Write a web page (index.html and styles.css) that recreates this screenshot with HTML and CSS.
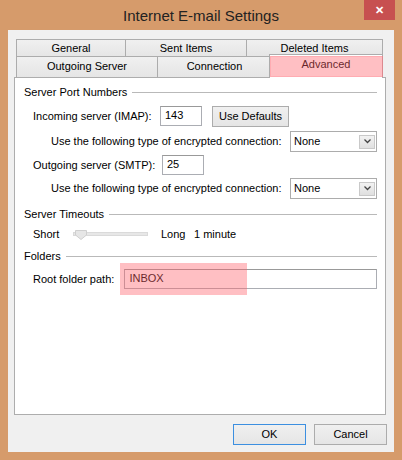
FILE: index.html
```html
<!DOCTYPE html>
<html lang="en">
<head>
    <meta charset="UTF-8">
    <title>Internet E-mail Settings</title>
    <link rel="stylesheet" href="styles.css">
</head>
<body>
    <div class="window">
        <!-- title bar -->
        <div class="titlebar">
            <span></span>
            <span class="title">Internet E-mail Settings</span>
            <span class="close">&#x2715;</span>
        </div>

        <div class="client">
            <div class="tabs">
                <div class="tab-row">
                    <div class="tab" style="width: 110px">General</div>
                    <div class="tab" style="width: 122px">Sent Items</div>
                    <div class="tab" style="width: 137px">Deleted Items</div>
                </div>
                <div class="tab-row">
                    <div class="tab tall" style="width: 142px">Outgoing Server</div>
                    <div class="tab tall" style="width: 115px">Connection</div>
                    <div class="tab tall selected" style="width: 114px">Advanced</div>
                </div>
            </div>

            <div class="panel">
                <div class="group-title"><span>Server Port Numbers</span></div>

                <div class="row r-imap">
                    <span class="label w-imap">Incoming server (IMAP):</span>
                    <span class="textbox port">143</span>
                    <span class="button defaults">Use Defaults</span>
                </div>
                <div class="row r-enc1">
                    <span class="label sub">Use the following type of encrypted connection:</span>
                    <span class="select">None<span class="arrow"><svg width="7" height="5" viewBox="0 0 7 5"><path d="M0.5 0.5 L3.5 3.5 L6.5 0.5" fill="none" stroke="#444" stroke-width="1.3"/></svg></span></span>
                </div>
                <div class="row r-smtp">
                    <span class="label w-smtp">Outgoing server (SMTP):</span>
                    <span class="textbox port">25</span>
                </div>
                <div class="row r-enc2">
                    <span class="label sub">Use the following type of encrypted connection:</span>
                    <span class="select">None<span class="arrow"><svg width="7" height="5" viewBox="0 0 7 5"><path d="M0.5 0.5 L3.5 3.5 L6.5 0.5" fill="none" stroke="#444" stroke-width="1.3"/></svg></span></span>
                </div>

                <div class="group-title g-timeout"><span>Server Timeouts</span></div>
                <div class="row r-slider">
                    <span class="label w-short">Short</span>
                    <span class="slider">
                        <svg class="thumb" width="12" height="10" viewBox="0 0 12 10"><path d="M0.5 0.5 H11.5 V5 L6 9.5 L0.5 5 Z" fill="#e6e6e6" stroke="#cfcfcf"/></svg>
                    </span>
                    <span class="label w-long">Long</span>
                    <span class="label">1 minute</span>
                </div>

                <div class="group-title g-folders"><span>Folders</span></div>
                <div class="row r-root">
                    <span class="label w-root">Root folder path:</span>
                    <span class="textbox root">INBOX</span>
                    <span class="mark"></span>
                </div>
            </div>

            <div class="footer">
                <span class="button ok">OK</span>
                <span class="button">Cancel</span>
            </div>
        </div>
    </div>
</body>
</html>
```

FILE: styles.css
```css
body {
    margin: 0;
    background-color: #d69b6b;
    font-family: "Liberation Sans", Arial, sans-serif;
    font-size: 11px;
    color: #000;
}
.window {
    width: 402px;
    height: 460px;
}
/* title bar */
.titlebar {
    height: 30px;
    display: grid;
    grid-template-columns: 1fr auto 1fr;
}
.title {
    font-size: 15px;
    color: #222;
    line-height: 30px;
    padding-top: 1px;
}
.close {
    justify-self: end;
    width: 31px;
    height: 20px;
    margin-right: 7px;
    background-color: #c75050;
    color: #fff;
    font-size: 11px;
    font-weight: bold;
    text-align: center;
    line-height: 20px;
}
.client {
    margin: 0 8px;
    height: 422px;
    box-sizing: border-box;
    padding: 9px 8px 0 6px;
    background-color: #f0f0f0;
}
/* tabs */
.tabs {
    margin: 0 2px;
}
.tab-row {
    display: flex;
}
.tab {
    box-sizing: border-box;
    height: 18px;
    border: 1px solid #acacac;
    border-bottom: none;
    margin-right: -1px;
    background: linear-gradient(#f0f0f0, #e5e5e5);
    text-align: center;
    line-height: 16px;
}
.tab.tall {
    height: 21px;
    line-height: 19px;
}
.tab-row + .tab-row {
    margin-top: -1px;
}
.tab.selected {
    position: relative;
    height: 24px;
    margin: -2px 0 -1px -2px;
    background: #fff;
    z-index: 1;
    line-height: 18px;
}
.tab.selected::after {
    content: "";
    position: absolute;
    left: 0;
    top: 1px;
    right: -1px;
    bottom: 1px;
    background-color: rgba(255, 95, 105, 0.4);
    border: 1px solid rgba(255, 130, 140, 0.3);
}
/* panel */
.panel {
    position: relative;
    box-sizing: border-box;
    width: 372px;
    height: 338px;
    padding: 6px 8px 0 9px;
    background-color: #fff;
    border: 1px solid #adadad;
}
.group-title {
    display: flex;
    align-items: center;
    height: 16px;
    line-height: 16px;
}
.group-title::after {
    content: "";
    flex: 1;
    height: 1px;
    margin-left: 5px;
    background-color: #b9b9b9;
}
.g-timeout {
    margin-top: 8px;
}
.g-folders {
    margin-top: 6px;
}
.row {
    display: flex;
    align-items: center;
    height: 20px;
    padding-left: 9px;
}
.r-imap { margin-top: 6px; }
.r-enc1 { margin-top: 5px; }
.r-smtp { margin-top: 4px; }
.r-enc2 { margin-top: 3px; }
.r-slider { margin-top: 4px; height: 16px; }
.r-root { margin-top: 5px; position: relative; }
.label {
    white-space: nowrap;
}
.w-imap { width: 127px; }
.w-smtp { width: 129px; }
.w-short { width: 40px; }
.w-long { width: 33px; }
.w-root { width: 92px; }
.label.sub {
    margin-left: 18px;
}
.textbox {
    box-sizing: border-box;
    height: 20px;
    border: 1px solid #abadb3;
    border-top-color: #999;
    padding-left: 4px;
    line-height: 17px;
    background: #fff;
}
.port {
    width: 42px;
}
.root {
    width: 254px;
}
.button {
    box-sizing: border-box;
    display: inline-block;
    width: 73px;
    height: 21px;
    border: 1px solid #acacac;
    background: linear-gradient(#f0f0f0, #e5e5e5);
    text-align: center;
    line-height: 19px;
}
.defaults {
    width: 77px;
    margin-left: 10px;
}
.select {
    position: relative;
    box-sizing: border-box;
    width: 87px;
    height: 21px;
    margin-left: auto;
    border: 1px solid #acacac;
    padding-left: 3px;
    line-height: 18px;
    background: #fff;
}
.arrow {
    position: absolute;
    right: 1px;
    top: 3px;
    width: 16px;
    height: 14px;
    box-sizing: border-box;
    border: 1px solid #c9c9c9;
    background: linear-gradient(#f2f2f2, #e0e0e0);
    display: flex;
    align-items: center;
    justify-content: center;
}
.slider {
    position: relative;
    width: 75px;
    height: 4px;
    margin-right: 13px;
    background-color: #e7e7e7;
    border: 1px solid #dadada;
    box-sizing: border-box;
}
.thumb {
    position: absolute;
    left: 1px;
    top: -3px;
}
.mark {
    position: absolute;
    left: 96px;
    top: -6px;
    width: 127px;
    height: 32px;
    background-color: rgba(255, 95, 105, 0.4);
}
/* buttons at the bottom */
.footer {
    display: flex;
    justify-content: flex-end;
    gap: 8px;
    margin-top: 9px;
    margin-right: -1px;
}
.button.ok {
    border-color: #3c8fe0;
}
```
